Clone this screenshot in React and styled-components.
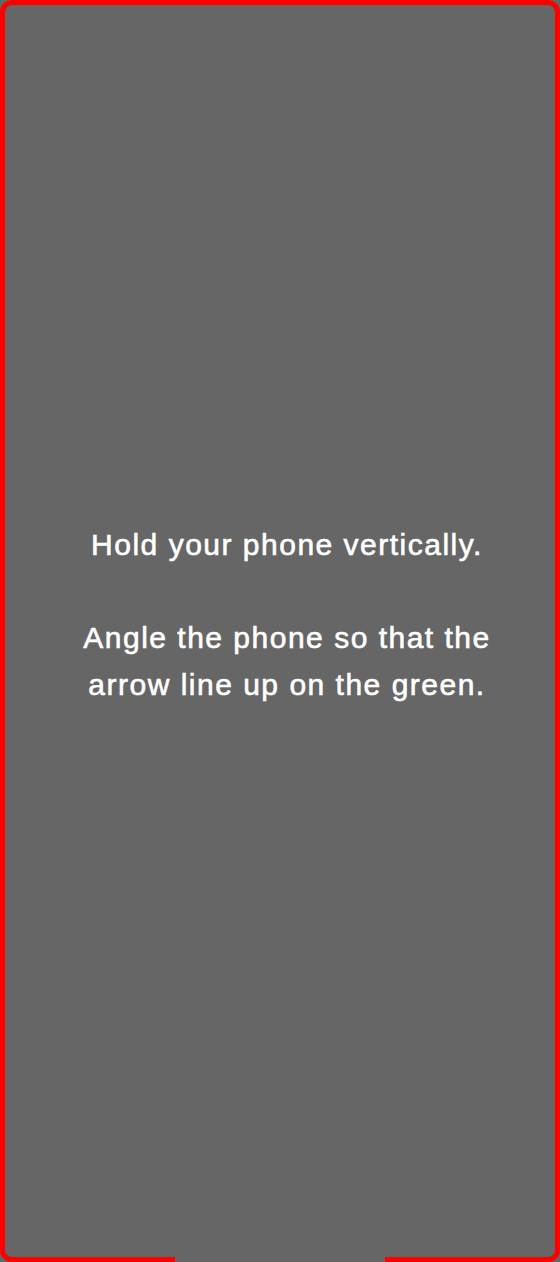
import React from "react";
import styled, { createGlobalStyle } from "styled-components";

const GlobalStyle = createGlobalStyle`
  html, body {
    margin: 0;
    padding: 0;
    background: #666666;
  }
  * { box-sizing: border-box; }
`;

const Frame = styled.div`
  position: relative;
  width: 560px;
  height: 1262px;
  background: #666666;
  border: 5px solid #ff0000;
  border-radius: 12px;
  display: flex;
  align-items: center;
  justify-content: center;
  padding: 0 0 32px 14px;
`;

const BottomGap = styled.div`
  position: absolute;
  left: 170px;
  bottom: -5px;
  width: 210px;
  height: 5px;
  background: #666666;
`;

const Message = styled.p`
  margin: 0;
  color: #ffffff;
  font-family: "Liberation Sans", Arial, Helvetica, sans-serif;
  font-size: 30px;
  line-height: 46.5px;
  letter-spacing: 1.5px;
  text-align: center;
  -webkit-text-stroke: 0.6px #ffffff;
`;

export default function App() {
  return (
    <>
      <GlobalStyle />
      <Frame>
        <Message>
          Hold your phone vertically.
          <br />
          <br />
          Angle the phone so that the
          <br />
          arrow line up on the green.
        </Message>
        <BottomGap />
      </Frame>
    </>
  );
}
